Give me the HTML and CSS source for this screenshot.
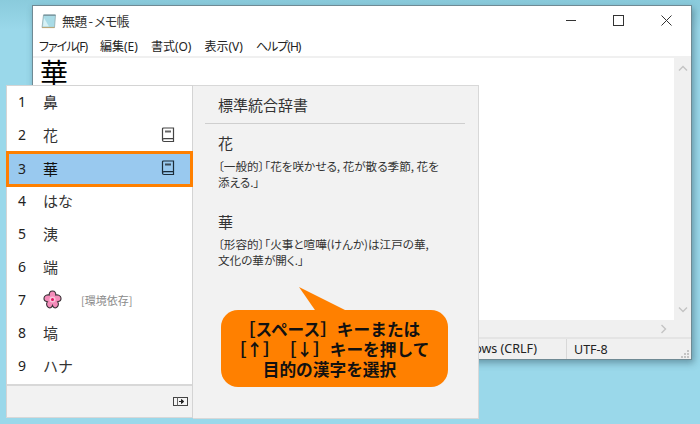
FILE: index.html
```html
<!DOCTYPE html>
<html lang="ja">
<head>
<meta charset="utf-8">
<title>メモ帳</title>
<link rel="stylesheet" href="styles.css">
</head>
<body>
<div class="desktop">
  <section class="window">
    <header class="titlebar">
      <svg class="app-icon" width="16" height="16" viewBox="0 0 16 16">
        <path d="M2.5 2 H14.5 L13.5 14.5 H1 Z" fill="#a9dbe6" stroke="#8fa9ad" stroke-width=".8"/>
        <path d="M3 5 L2 13.5 H8 Z" fill="#d8f1f5"/>
        <path d="M2.5 1.5 H14.5 V3 H2.5 Z" fill="#7d9aa3"/>
        <path d="M1 14.5 H13.5" stroke="#b9a77a" stroke-width="1.2"/>
      </svg>
      <span class="title">無題 - メモ帳</span>
      <div class="controls">
        <svg width="11" height="11" viewBox="0 0 11 11"><path d="M1 5.5 H11" stroke="#333" stroke-width="1"/></svg>
        <svg width="11" height="11" viewBox="0 0 11 11"><rect x=".5" y=".5" width="10" height="10" fill="none" stroke="#333"/></svg>
        <svg width="11" height="11" viewBox="0 0 11 11"><path d="M.5 .5 L10.5 10.5 M10.5 .5 L.5 10.5" stroke="#333" stroke-width="1"/></svg>
      </div>
    </header>
    <nav class="menubar">
      <span class="kana">ファイル(F)</span><span>編集(E)</span><span>書式(O)</span><span>表示(V)</span><span class="kana">ヘルプ(H)</span>
    </nav>
    <div class="editor-row">
      <div class="editor"><span class="typed">華</span></div>
      <div class="vscroll">
        <svg width="10" height="6" viewBox="0 0 10 6"><path d="M1 5.5 L5 1.5 L9 5.5" fill="none" stroke="#c4c4c4" stroke-width="1.4"/></svg>
        <svg width="10" height="6" viewBox="0 0 10 6"><path d="M1 .5 L5 4.5 L9 .5" fill="none" stroke="#c4c4c4" stroke-width="1.4"/></svg>
      </div>
    </div>
    <div class="hscroll">
      <svg width="6" height="10" viewBox="0 0 6 10"><path d="M.5 1 L4.5 5 L.5 9" fill="none" stroke="#c4c4c4" stroke-width="1.4"/></svg>
    </div>
    <footer class="statusbar">
      <span class="eol">Windows (CRLF)</span>
      <span class="enc">UTF-8</span>
      <svg class="grip" width="10" height="10" viewBox="0 0 10 10" fill="#c4c4c4">
        <rect x="7" y="1" width="2" height="2"/><rect x="4" y="4" width="2" height="2"/><rect x="7" y="4" width="2" height="2"/>
        <rect x="1" y="7" width="2" height="2"/><rect x="4" y="7" width="2" height="2"/><rect x="7" y="7" width="2" height="2"/>
      </svg>
    </footer>
  </section>

  <section class="ime">
    <div class="candidates">
      <ol class="list">
        <li class="row"><span class="num">1</span><span class="cand">鼻</span></li>
        <li class="row"><span class="num">2</span><span class="cand">花</span>
          <svg class="book" width="14" height="16" viewBox="0 0 14 16"><path d="M1.5 13 V2 Q1.5 1 2.5 1 H12.5 V14.5 H3 Q1.5 14.5 1.5 13 Q1.5 11.7 3 11.7 H12.5" fill="none" stroke="#444" stroke-width="1.2"/><rect x="4" y="3.5" width="6" height="2" fill="#666"/></svg>
        </li>
        <li class="row selected"><span class="num">3</span><span class="cand">華</span>
          <svg class="book" width="14" height="16" viewBox="0 0 14 16"><path d="M1.5 13 V2 Q1.5 1 2.5 1 H12.5 V14.5 H3 Q1.5 14.5 1.5 13 Q1.5 11.7 3 11.7 H12.5" fill="none" stroke="#1c2c38" stroke-width="1.2"/><rect x="4" y="3.5" width="6" height="2" fill="#3c4c58"/></svg>
        </li>
        <li class="row"><span class="num">4</span><span class="cand">はな</span></li>
        <li class="row"><span class="num">5</span><span class="cand">洟</span></li>
        <li class="row"><span class="num">6</span><span class="cand">端</span></li>
        <li class="row"><span class="num">7</span>
          <svg class="flower" width="19" height="19" viewBox="0 0 19 19">
            <path d="M9.5 1 C12 1 13 3 12.7 5 C15 4.5 17.8 5.5 18 8 C18.2 10.2 16.5 11.5 14.6 11.7 C16 13.5 15.5 16.5 13.5 17.5 C11.5 18.5 10 17 9.5 15.5 C9 17 7.5 18.5 5.5 17.5 C3.5 16.5 3 13.5 4.4 11.7 C2.5 11.5 .8 10.2 1 8 C1.2 5.5 4 4.5 6.3 5 C6 3 7 1 9.5 1 Z" fill="#f48cba" stroke="#3a3036" stroke-width="1.1"/>
            <circle cx="9.5" cy="9.5" r="3" fill="#f9c3d9"/>
            <circle cx="9.5" cy="9.5" r="1.5" fill="#e0115f"/>
          </svg>
          <span class="note">[環境依存]</span>
        </li>
        <li class="row"><span class="num">8</span><span class="cand">塙</span></li>
        <li class="row"><span class="num">9</span><span class="cand">ハナ</span></li>
      </ol>
      <div class="list-foot">
        <svg width="15" height="9" viewBox="0 0 15 9">
          <rect x=".5" y=".5" width="14" height="8" fill="#f4f4f4" stroke="#444"/>
          <path d="M4.5 .5 V8.5" stroke="#666"/>
          <path d="M6 4.5 H10 M8.5 2.5 L10.8 4.5 L8.5 6.5 Z" stroke="#222" fill="#222"/>
        </svg>
      </div>
    </div>
    <aside class="dict">
      <h2 class="dict-name">標準統合辞書</h2>
      <h3 class="word">花</h3>
      <p class="meaning"><span class="line">〔一般的〕「花を咲かせる, 花が散る季節, 花を</span><span class="line">添える.」</span></p>
      <h3 class="word second">華</h3>
      <p class="meaning tight"><span class="line">〔形容的〕「火事と喧嘩(けんか)は江戸の華,</span><span class="line">文化の華が開く.」</span></p>
    </aside>
  </section>

  <div class="callout">
    <svg class="tail" width="60" height="30" viewBox="0 0 60 30"><path d="M0 0 L52 26 L18 26 Z" fill="#ff8000"/></svg>
    <p class="callout-text"><span class="line">［スペース］キーまたは</span><span class="line">［↑］［↓］キーを押して</span><span class="line">目的の漢字を選択</span></p>
  </div>
</div>
</body>
</html>
```

FILE: styles.css
```css
* { box-sizing: border-box; }
html, body { margin: 0; padding: 0; }
body { width: 700px; height: 424px; overflow: hidden; }

.desktop {
  position: relative;
  width: 700px;
  height: 424px;
  background: linear-gradient(180deg, #8acbdc 0, #9ad8ea 30px, #9ad8ea 100%);
  font-family: "Noto Sans", "Noto Sans CJK JP", sans-serif;
  color: #1a1a1a;
}
.line { display: block; }

/* Notepad window */
.window {
  position: absolute;
  left: 32px;
  top: 5px;
  width: 660px;
  height: 355px;
  display: flex;
  flex-direction: column;
  background: #fff;
  border: 1px solid #6f8a94;
  box-shadow: 2px 3px 7px rgba(40, 70, 85, .45);
}
.titlebar {
  height: 31px;
  flex: none;
  display: flex;
  align-items: center;
  padding: 0 0 2px 8px;
}
.app-icon { flex: none; }
.title {
  margin-left: 5px;
  font-size: 13px;
  line-height: 16px;
  letter-spacing: -.8px;
  color: #333;
  font-family: "Noto Sans CJK JP", sans-serif;
  font-feature-settings: "palt";
}
.controls {
  margin-left: auto;
  margin-right: 19px;
  display: flex;
  gap: 37px;
  align-items: center;
}
.menubar {
  height: 19px;
  flex: none;
  display: flex;
  gap: 13px;
  padding-left: 6px;
  align-items: center;
  font-size: 12px;
  line-height: 14px;
  color: #222;
  font-family: "Noto Sans", "Noto Sans CJK JP", sans-serif;
  font-feature-settings: "palt";
  border-bottom: 2px solid #f0f0f0;
  box-sizing: content-box;
}
.kana { letter-spacing: -1px; }
.editor-row { flex: 1; display: flex; min-height: 0; }
.editor { flex: 1; padding-left: 7px; }
.typed {
  display: block;
  width: 28px;
  font-size: 28px;
  line-height: 28px;
  color: #000;
  font-family: "Noto Sans CJK JP", sans-serif;
  border-bottom: 1px solid #000;
}
.vscroll {
  width: 17px;
  flex: none;
  background: #f0f0f0;
  display: flex;
  flex-direction: column;
  justify-content: space-between;
  align-items: center;
  padding: 7px 0;
}
.hscroll {
  height: 17px;
  flex: none;
  background: #f0f0f0;
  display: flex;
  align-items: center;
  justify-content: flex-end;
  padding-right: 24px;
}
.statusbar {
  height: 22px;
  flex: none;
  display: flex;
  align-items: center;
  justify-content: flex-end;
  background: #f0f0f0;
  border-top: 2px solid #e4e4e4;
  font-size: 12.5px;
  color: #222;
  position: relative;
}
.eol { padding-right: 29px; border-right: 1px solid #d8d8d8; line-height: 20px; }
.enc { width: 124px; padding-left: 7px; }
.grip { position: absolute; right: 1px; bottom: 0; }

/* IME candidate window */
.ime {
  position: absolute;
  left: 6px;
  top: 85px;
  width: 473px;
  height: 334px;
  display: flex;
  font-family: "Noto Sans CJK JP", sans-serif;
}
.candidates {
  width: 187px;
  height: 333px;
  flex: none;
  display: flex;
  flex-direction: column;
  background: #fff;
  border: 1px solid #d4d4d4;
  border-bottom-color: #d8d8d8;
}
.list { list-style: none; margin: 0; padding: 0; }
.row {
  position: relative;
  height: 33px;
  display: flex;
  align-items: center;
  padding: 0 0 2px 11px;
  font-size: 15px;
  color: #333;
}
.num {
  width: 25px;
  flex: none;
  font-family: "Noto Sans", sans-serif;
  font-size: 14px;
  color: #222;
}
.book { position: absolute; left: 154px; top: 8px; }
.selected {
  left: -1px;
  width: 187px;
  height: 36px;
  margin: -1px 0 -2px;
  padding: 0 0 2px 12px;
  background: #99c9ef;
  border: 3px solid #ff8000;
  color: #111;
}
.selected .num { width: 25px; margin-left: -3px; }
.selected .book { left: 152px; top: 6px; }
.flower { flex: none; }
.note { margin-left: 19px; font-size: 11px; color: #8a8a8a; }
.list-foot {
  margin-top: auto;
  height: 33px;
  background: #f2f2f2;
  border-top: 2px solid #d8d8d8;
  display: flex;
  align-items: center;
  justify-content: flex-end;
  padding-right: 4px;
}
.dict {
  width: 286px;
  flex: none;
  background: #f2f2f2;
  border: 1px solid #d8d8d8;
  border-left: none;
  padding: 0 13px 0 12px;
  color: #333;
}
.dict-name {
  margin: 0;
  height: 38px;
  padding: 8px 0 0 13px;
  font-size: 15px;
  line-height: 22px;
  font-weight: 400;
  border-bottom: 1px solid #cfcfcf;
}
.word {
  margin: 8px 0 0 13px;
  font-size: 15px;
  line-height: 22px;
  font-weight: 400;
}
.word.second { margin-top: 21px; }
.meaning {
  margin: 4px 0 0 13px;
  white-space: nowrap;
  font-size: 11.6px;
  line-height: 16px;
  color: #333;
  font-feature-settings: "palt";
}
.meaning.tight { margin-top: 3px; }

/* Callout */
.callout {
  position: absolute;
  left: 221px;
  top: 310px;
  width: 227px;
  height: 77px;
  padding-right: 10px;
  background: #ff8000;
  border-radius: 17px;
  display: flex;
  align-items: center;
  justify-content: center;
}
.tail { position: absolute; left: 78px; top: -23px; }
.callout-text {
  position: relative;
  margin: 0;
  text-align: center;
  font-family: "Noto Sans CJK JP", sans-serif;
  font-size: 16.7px;
  line-height: 20px;
  font-weight: 700;
  color: #111;
  text-spacing-trim: space-all;
}
```
